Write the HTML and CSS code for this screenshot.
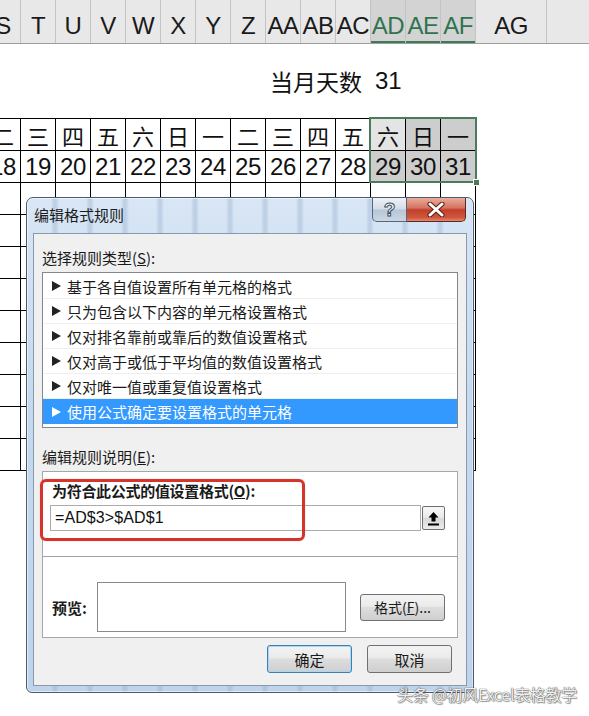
FILE: index.html
```html
<!DOCTYPE html>
<html lang="zh-CN">
<head>
<meta charset="utf-8">
<title>编辑格式规则</title>
<link rel="stylesheet" href="styles.css">
</head>
<body>
<div class="sheet">
  <div class="colhead">
    <div class="ch">S</div><div class="ch">T</div><div class="ch">U</div><div class="ch">V</div><div class="ch">W</div><div class="ch">X</div><div class="ch">Y</div><div class="ch">Z</div><div class="ch">AA</div><div class="ch">AB</div><div class="ch">AC</div><div class="ch sel">AD</div><div class="ch sel">AE</div><div class="ch sel">AF</div><div class="ch">AG</div><div class="ch"></div>
  </div>
  <div class="titlerow"><span class="days-label">当月天数</span><span class="days-num">31</span></div>
  <div class="grid">
    <div class="cell wd">二</div><div class="cell wd">三</div><div class="cell wd">四</div><div class="cell wd">五</div><div class="cell wd">六</div><div class="cell wd">日</div><div class="cell wd">一</div><div class="cell wd">二</div><div class="cell wd">三</div><div class="cell wd">四</div><div class="cell wd">五</div><div class="cell wd a">六</div><div class="cell wd s">日</div><div class="cell wd s">一</div>
    <div class="cell num">18</div><div class="cell num">19</div><div class="cell num">20</div><div class="cell num">21</div><div class="cell num">22</div><div class="cell num">23</div><div class="cell num">24</div><div class="cell num">25</div><div class="cell num">26</div><div class="cell num">27</div><div class="cell num">28</div><div class="cell num s">29</div><div class="cell num s">30</div><div class="cell num s">31</div>
    <div class="blank"></div>
  </div>
  <div class="selection"><span class="handle"></span></div>

  <div class="dialog">
    <div class="titlebar">
      <div class="title">编辑格式规则</div>
      <div class="winbtns">
        <div class="help"><span class="q">?</span></div>
        <div class="close">
          <svg width="20" height="15" viewBox="0 0 20 15"><path d="M4 2 L16 13 M16 2 L4 13" stroke="#5a1c12" stroke-width="5" stroke-linecap="round" fill="none"/><path d="M4 2 L16 13 M16 2 L4 13" stroke="#ffffff" stroke-width="3" stroke-linecap="round" fill="none"/></svg>
        </div>
      </div>
    </div>
    <div class="client">
      <div class="lbl lbl1">选择规则类型(<u>S</u>):</div>
      <div class="list">
        <div class="item"><span class="arr"></span>基于各自值设置所有单元格的格式</div>
        <div class="item"><span class="arr"></span>只为包含以下内容的单元格设置格式</div>
        <div class="item"><span class="arr"></span>仅对排名靠前或靠后的数值设置格式</div>
        <div class="item"><span class="arr"></span>仅对高于或低于平均值的数值设置格式</div>
        <div class="item"><span class="arr"></span>仅对唯一值或重复值设置格式</div>
        <div class="item on"><span class="arr"></span>使用公式确定要设置格式的单元格</div>
      </div>
      <div class="lbl lbl2">编辑规则说明(<u>E</u>):</div>
      <div class="panel">
        <div class="rule">
          <div class="rule-lbl">为符合此公式的值设置格式(<u>O</u>):</div>
          <div class="formula-row">
            <div class="formula">=AD$3&gt;$AD$1</div>
            <div class="pick">
              <svg width="13" height="15" viewBox="0 0 13 15"><path d="M6.5 1 L1.5 6.5 H4.5 V10.5 H8.5 V6.5 H11.5 Z" fill="#000"/><rect x="1" y="12.5" width="11" height="2" fill="#000"/></svg>
            </div>
          </div>
        </div>
        <div class="preview">
          <div class="pv-lbl">预览:</div>
          <div class="pv-box"></div>
          <div class="btn fmt-btn">格式(<u>F</u>)...</div>
        </div>
      </div>
      <div class="actions">
        <div class="btn default">确定</div>
        <div class="btn">取消</div>
      </div>
    </div>
  </div>

  <div class="mark"></div>
  <div class="watermark">头条 @初风Excel表格教学</div>
</div>
</body>
</html>
```
FILE: styles.css
```css
* { box-sizing: border-box; }
html, body { margin: 0; padding: 0; }
body {
  width: 589px;
  height: 716px;
  overflow: hidden;
  background: #fff;
  font-family: "Liberation Sans", "Noto Sans CJK SC", sans-serif;
}
.sheet { position: relative; width: 589px; height: 716px; overflow: hidden; }

/* column header */
.colhead {
  display: grid;
  grid-template-columns: repeat(14, 35px) 71px 100px;
  margin-left: -14px;
  height: 44px;
  background: #e8e8e8;
  border-bottom: 1px solid #9e9e9e;
}
.ch {
  border-right: 1px solid #c3c3c3;
  text-align: center;
  font-size: 24px;
  line-height: 28px;
  padding-top: 12px;
  color: #1a1a1a;
  letter-spacing: -0.5px;
  white-space: nowrap;
}
.ch.sel {
  background: #d3d3d3;
  color: #2f7351;
  box-shadow: inset 0 -2px 0 #3d7a56;
}

/* title row */
.titlerow {
  height: 74px;
  display: flex;
  align-items: center;
  padding-left: 270px;
  color: #111;
}
.days-label { font-family: "Noto Sans CJK SC", sans-serif; font-size: 23px; line-height: 30px; }
.days-num { font-size: 24px; margin-left: 13px; }

/* table */
.grid {
  display: grid;
  grid-template-columns: repeat(14, 35px);
  width: 490px;
  margin-left: -14px;
  border-top: 1px solid #000;
}
.cell {
  height: 32px;
  border-right: 1px solid #000;
  border-bottom: 1px solid #000;
  display: flex;
  align-items: center;
  justify-content: center;
  color: #111;
  white-space: nowrap;
  overflow: hidden;
}
.wd { font-family: "Noto Sans CJK SC", sans-serif; font-size: 22px; }
.num { font-size: 24px; letter-spacing: -0.3px; }
.s { background: #cdcdcd; }
.a { background: #e4e4e4; }
.blank {
  grid-column: 1 / -1;
  height: 288px;
  background-image:
    repeating-linear-gradient(to right, transparent 0 34px, #000 34px 35px),
    repeating-linear-gradient(to bottom, transparent 0 31px, #000 31px 32px);
}
.selection {
  position: absolute;
  left: 369px;
  top: 117px;
  width: 108px;
  height: 66px;
  border: 2px solid #4b7b5a;
}
.handle {
  position: absolute;
  right: -5px;
  bottom: -5px;
  width: 7px;
  height: 7px;
  background: #4b7b5a;
  border: 1px solid #fff;
}

/* dialog */
.dialog {
  position: absolute;
  left: 26px;
  top: 197px;
  width: 448px;
  height: 496px;
  border: 1px solid #4c5b6e;
  border-radius: 7px 7px 6px 6px;
  padding: 0 6px 6px;
  display: flex;
  flex-direction: column;
  font-family: "Noto Sans CJK SC", sans-serif;
  color: #1a1a1a;
  background:
    repeating-linear-gradient(90deg, rgba(255,255,255,0) 0 24px, rgba(140,168,202,.35) 27px, rgba(140,168,202,.35) 29px, rgba(255,255,255,0) 32px 35px),
    linear-gradient(#d8e6f5, #c6d9ee 40%, #bfd4ec);
  box-shadow: inset 0 0 0 1px rgba(255,255,255,.55);
}
.titlebar { height: 35px; display: flex; align-items: flex-start; }
.title { font-size: 15px; line-height: 20px; margin-top: 7px; padding-left: 1px; color: #1b1b1b; }
.winbtns { margin-left: auto; margin-right: 1px; display: flex; }
.help {
  width: 35px;
  height: 24px;
  border: 1px solid #56677c;
  border-top: none;
  border-radius: 0 0 0 5px;
  background: linear-gradient(#eef2f7, #d3dce7 48%, #b8c6d7 52%, #cbd6e3);
  display: flex;
  align-items: center;
  justify-content: center;
}
.q {
  font: bold 19px "Liberation Sans", sans-serif;
  color: #fff;
  -webkit-text-stroke: 1px #3c4c60;
  line-height: 20px;
}
.close {
  width: 59px;
  height: 24px;
  border: 1px solid #5d2a23;
  border-left: none;
  border-top: none;
  border-radius: 0 0 5px 0;
  background: linear-gradient(#e9ac9c, #d77562 42%, #c2402b 52%, #cf573d 85%, #df8a70);
  display: flex;
  align-items: center;
  justify-content: center;
}
.client {
  flex: 1;
  background: #f0f0f0;
  border: 1px solid #8898ad;
  padding: 0 8px;
  display: flex;
  flex-direction: column;
}
.lbl { font-size: 15px; line-height: 20px; }
.lbl1 { margin-top: 14px; }
.lbl2 { margin-top: 19px; }
.list {
  margin-top: 4px;
  background: #fff;
  border: 1px solid #82878f;
  padding: 1px 0 3px;
}
.item {
  height: 25px;
  display: flex;
  align-items: center;
  padding-left: 9px;
  font-size: 15px;
  border-bottom: 1px solid #efefef;
  white-space: nowrap;
}
.arr {
  width: 0;
  height: 0;
  border-left: 9px solid #222;
  border-top: 5px solid transparent;
  border-bottom: 5px solid transparent;
  margin-right: 6px;
}
.item.on { background: #3399ff; color: #fff; border-bottom: none; }
.item.on .arr { border-left-color: #fff; }

.panel { margin-top: 4px; background: #fff; border: 1px solid #a7a7a7; }
.rule { height: 85px; border-bottom: 1px solid #a0a0a0; padding: 9px 0 0 7px; }
.rule-lbl { font-weight: bold; font-size: 15px; letter-spacing: -0.3px; line-height: 20px; margin-left: 2px; }
.formula-row { display: flex; margin-top: 4px; }
.formula {
  width: 371px;
  height: 26px;
  border: 1px solid #ababab;
  font: 16px "Liberation Sans", sans-serif;
  letter-spacing: 0.1px;
  line-height: 24px;
  padding-left: 4px;
  color: #111;
  background: #fff;
}
.pick {
  width: 23px;
  height: 24px;
  margin: 1px 0 0 1px;
  border: 1px solid #6f6f6f;
  border-radius: 2px;
  background: linear-gradient(#f8f8f8, #e8e8e8 50%, #d9d9d9 52%, #ebebeb);
  display: flex;
  align-items: center;
  justify-content: center;
}
.preview { display: flex; align-items: center; padding: 25px 0 5px 9px; }
.pv-lbl { width: 45px; font-weight: bold; font-size: 15px; }
.pv-box { width: 249px; height: 50px; border: 1px solid #8a8a8a; background: #fff; }
.btn {
  width: 85px;
  height: 28px;
  border: 1px solid #707070;
  border-radius: 3px;
  background: linear-gradient(#f3f3f3, #ebebeb 45%, #dddddd 50%, #cfcfcf);
  font-size: 15px;
  display: flex;
  align-items: center;
  justify-content: center;
  color: #1a1a1a;
}
.fmt-btn { margin-left: 14px; height: 27px; font-size: 14px; }
.btn.default { border-color: #3c7fb1; box-shadow: inset 0 0 0 1px #a9d8f3; }
.actions { display: flex; justify-content: flex-end; gap: 15px; margin-top: 7px; margin-right: 6px; }

/* red annotation */
.mark {
  position: absolute;
  left: 40px;
  top: 479px;
  width: 265px;
  height: 62px;
  border: 3px solid #d6332b;
  border-radius: 6px;
  box-shadow: 0 0 1px rgba(214,51,43,.6);
}

.watermark {
  position: absolute;
  left: 397px;
  top: 682px;
  font-family: "Noto Sans CJK SC", sans-serif;
  font-size: 16px;
  letter-spacing: -0.3px;
  color: rgba(255,255,255,.92);
  text-shadow: 0 0 1px #555, 0 0 1px #555, 1px 1px 1px rgba(0,0,0,.35);
  white-space: nowrap;
}
```
